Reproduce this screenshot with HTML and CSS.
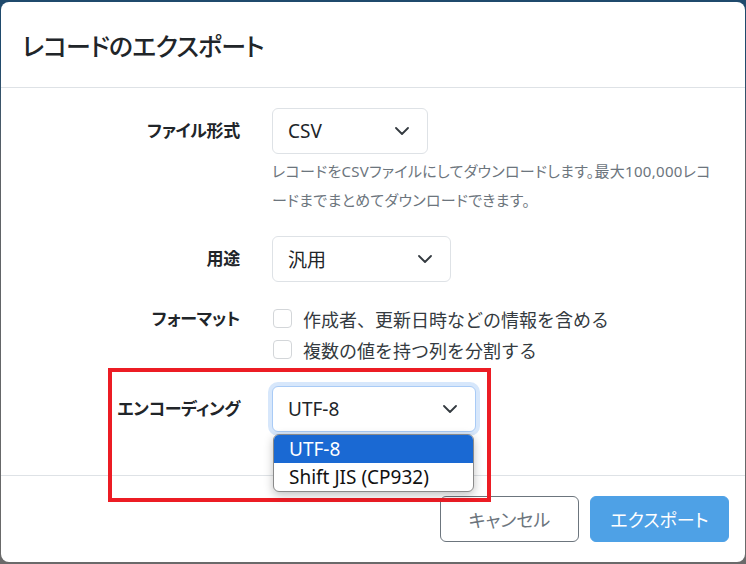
FILE: index.html
```html
<!DOCTYPE html>
<html lang="ja">
<head>
<meta charset="utf-8">
<title>レコードのエクスポート</title>
<link rel="stylesheet" href="styles.css">
</head>
<body>
<div class="modal">
  <div class="modal-header">
    <h1 class="modal-title">レコードのエクスポート</h1>
  </div>
  <div class="modal-body">
    <div class="form-row">
      <div class="label label-select">ファイル形式</div>
      <div class="control">
        <div class="select select-csv">
          <span>CSV</span>
          <svg class="chev" width="14" height="8" viewBox="0 0 14 8"><path d="M1 1l6 6 6-6" fill="none" stroke="#343a40" stroke-width="1.8" stroke-linecap="round" stroke-linejoin="round"/></svg>
        </div>
        <p class="help">レコードをCSVファイルにしてダウンロードします。最大100,000レコードまでまとめてダウンロードできます。</p>
      </div>
    </div>
    <div class="form-row">
      <div class="label label-select">用途</div>
      <div class="control">
        <div class="select select-use">
          <span>汎用</span>
          <svg class="chev" width="14" height="8" viewBox="0 0 14 8"><path d="M1 1l6 6 6-6" fill="none" stroke="#343a40" stroke-width="1.8" stroke-linecap="round" stroke-linejoin="round"/></svg>
        </div>
      </div>
    </div>
    <div class="form-row">
      <div class="label label-check">フォーマット</div>
      <div class="control">
        <label class="check"><span class="box"></span><span>作成者、更新日時などの情報を含める</span></label>
        <label class="check"><span class="box"></span><span>複数の値を持つ列を分割する</span></label>
      </div>
    </div>
    <div class="form-row">
      <div class="label label-select">エンコーディング</div>
      <div class="control">
        <div class="select-wrap">
          <div class="select select-enc focused">
            <span>UTF-8</span>
            <svg class="chev" width="14" height="8" viewBox="0 0 14 8"><path d="M1 1l6 6 6-6" fill="none" stroke="#343a40" stroke-width="1.8" stroke-linecap="round" stroke-linejoin="round"/></svg>
          </div>
          <ul class="listbox">
            <li class="option selected">UTF-8</li>
            <li class="option">Shift JIS (CP932)</li>
          </ul>
        </div>
      </div>
    </div>
  </div>
  <div class="modal-footer">
    <button class="btn btn-cancel">キャンセル</button>
    <button class="btn btn-export">エクスポート</button>
  </div>
  <div class="annotation"></div>
</div>
</body>
</html>
```

FILE: styles.css
```css
* { box-sizing: border-box; }
html, body { height: 100%; }
body {
  margin: 0;
  padding: 2px 1px 2px 1px;
  background: linear-gradient(to bottom, #1f4a6c 0, #1f4a6c 60px, #5e6266 160px, #6a6a6a 100%);
  font-family: "Noto Sans", "Noto Sans CJK JP", sans-serif;
  font-feature-settings: "palt";
  color: #212529;
}
.modal {
  position: relative;
  height: 560px;
  background: #fff;
  border-radius: 8px;
  display: flex;
  flex-direction: column;
  overflow: hidden;
}
.modal-header {
  height: 86px;
  border-bottom: 1px solid #dee2e6;
  display: flex;
  align-items: center;
  padding: 0 21px;
}
.modal-title {
  margin: 0;
  font-size: 25px;
  font-weight: 500;
  color: #212529;
  letter-spacing: -0.8px;
}
.modal-body {
  flex: 1;
  padding-top: 20px;
  display: flex;
  flex-direction: column;
  gap: 21px;
}
.form-row {
  display: grid;
  grid-template-columns: 239px 1fr;
  column-gap: 32px;
  align-items: start;
}
.label {
  text-align: right;
  font-weight: 700;
  font-size: 17px;
  color: #212529;
  letter-spacing: -0.3px;
}
.label-select { line-height: 46px; }
.label-check { line-height: 31px; }
.control { min-width: 0; }
.select {
  height: 46px;
  border: 1px solid #dee2e6;
  border-radius: 6px;
  display: flex;
  align-items: center;
  justify-content: space-between;
  padding: 0 18px 0 15px;
  font-size: 19px;
  color: #212529;
  background: #fff;
}
.select-csv { width: 156px; }
.select-use { width: 179px; }
.select-enc { width: 204px; }
.select.focused {
  border-color: #a9cbf6;
  box-shadow: 0 0 0 4px #d7e7fb;
}
.chev { display: block; flex: none; }
.help {
  margin: 3px 0 0;
  width: 448px;
  font-size: 15px;
  line-height: 29px;
  letter-spacing: 0.3px;
  color: #6c757d;
}
.check {
  display: flex;
  align-items: center;
  gap: 11px;
  height: 31px;
  font-size: 18px;
  color: #343a40;
  font-feature-settings: normal;
}
.box {
  width: 19px;
  height: 19px;
  border: 1px solid #d3d6d9;
  border-radius: 4px;
  background: #fff;
  flex: none;
  margin-left: 1px;
}
.select-wrap { position: relative; width: 204px; }
.listbox {
  position: absolute;
  left: 1px;
  top: 48px;
  width: 201px;
  margin: 0;
  padding: 0;
  list-style: none;
  background: #fff;
  border: 1px solid #8a8a8a;
  border-radius: 6px;
  overflow: hidden;
  box-shadow: 0 3px 10px rgba(0,0,0,0.25);
  z-index: 2;
}
.option {
  height: 28px;
  line-height: 28px;
  padding: 0 15px;
  font-size: 19px;
  color: #111;
}
.option.selected {
  background: #1a69d3;
  color: #fff;
}
.modal-footer {
  height: 87px;
  border-top: 1px solid #dee2e6;
  display: flex;
  justify-content: flex-end;
  align-items: center;
  gap: 11px;
  padding: 0 16px 0 0;
}
.btn {
  width: 139px;
  height: 46px;
  border-radius: 6px;
  font-family: inherit;
  font-feature-settings: "palt";
  font-size: 18px;
  cursor: pointer;
}
.btn-cancel {
  background: #fff;
  border: 1px solid #6c757d;
  color: #6c757d;
}
.btn-export {
  background: #4ea1e6;
  border: 1px solid #4ea1e6;
  color: #fff;
}
.annotation {
  position: absolute;
  left: 107px;
  top: 366px;
  width: 383px;
  height: 134px;
  border: 4px solid #ec1c24;
  pointer-events: none;
  z-index: 1;
}
```
